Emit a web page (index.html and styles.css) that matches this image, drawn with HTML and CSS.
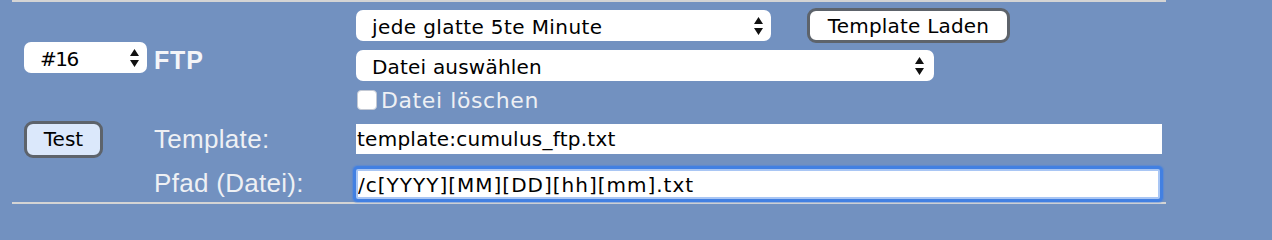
FILE: index.html
```html
<!DOCTYPE html>
<html lang="de">
<head>
<meta charset="utf-8">
<title>FTP</title>
<link rel="stylesheet" href="styles.css">
</head>
<body>
<div class="panel">
  <div class="cell c1 r1">
    <div class="select sel-num"><span class="sel-text">#16</span>
      <svg class="arrows" viewBox="0 0 9 18" width="9" height="18"><path d="M4.5 0 L9 7 L0 7 Z M0 11 L9 11 L4.5 18 Z"/></svg>
    </div>
  </div>
  <div class="cell c2 r1"><span class="title">FTP</span></div>
  <div class="cell c3 r1 stack">
    <div class="line">
      <div class="select sel-when"><span class="sel-text">jede glatte 5te Minute</span>
        <svg class="arrows" viewBox="0 0 9 18" width="9" height="18"><path d="M4.5 0 L9 7 L0 7 Z M0 11 L9 11 L4.5 18 Z"/></svg>
      </div>
      <button class="btn btn-load">Template Laden</button>
    </div>
    <div class="select sel-file"><span class="sel-text">Datei auswählen</span>
      <svg class="arrows" viewBox="0 0 9 18" width="9" height="18"><path d="M4.5 0 L9 7 L0 7 Z M0 11 L9 11 L4.5 18 Z"/></svg>
    </div>
    <label class="check"><span class="box"></span><span class="check-text">Datei löschen</span></label>
  </div>

  <div class="cell c1"><button class="btn btn-test">Test</button></div>
  <div class="cell c2"><span class="label">Template:</span></div>
  <div class="cell c3"><input class="field" type="text" value="template:cumulus_ftp.txt"></div>

  <div class="cell c1"></div>
  <div class="cell c2 low"><span class="label">Pfad (Datei):</span></div>
  <div class="cell c3 low"><input class="field focused" type="text" value="/c[YYYY][MM][DD][hh][mm].txt"></div>
</div>
</body>
</html>
```
FILE: styles.css
```css
html, body {
  margin: 0;
  padding: 0;
  background: #7291c0;
}

body {
  font-family: "Liberation Sans", Arial, sans-serif;
  width: 1272px;
  height: 206px;
  overflow: hidden;
}

.panel {
  margin-left: 12px;
  width: 1154px;
  border-top: 2px solid #d4d4d4;
  border-bottom: 2px solid #d4d4d4;
  display: grid;
  grid-template-columns: 142px 202px 810px;
  grid-template-rows: 116px 42px 42px;
}

.cell {
  display: flex;
  align-items: center;
}

.c1 {
  padding-left: 12px;
}

.c1.r1 {
  align-items: flex-start;
  padding-top: 40px;
}

.low {
  padding-top: 5px;
}

.stack {
  flex-direction: column;
  align-items: flex-start;
  padding-top: 6px;
}

.line {
  display: flex;
  align-items: center;
  gap: 36px;
  height: 35px;
}

.select {
  box-sizing: border-box;
  height: 31px;
  background: #fff;
  border-radius: 7px;
  display: flex;
  align-items: center;
  justify-content: space-between;
  padding: 3px 8px 0 16px;
  font-family: "DejaVu Sans", "Liberation Sans", sans-serif;
  font-size: 20px;
  letter-spacing: 0.4px;
  color: #000;
}

.arrows {
  fill: #111;
  flex: none;
  margin-top: -3px;
}

.sel-num {
  width: 123px;
  letter-spacing: -1.5px;
}

.sel-when {
  width: 415px;
}

.sel-file {
  width: 578px;
  margin-top: 7px;
  padding-right: 10px;
  letter-spacing: 0.2px;
}

.title {
  font-size: 25px;
  font-weight: bold;
  color: #f4f5f8;
  letter-spacing: 0.8px;
}

.label {
  font-size: 26px;
  letter-spacing: 0.3px;
  color: #eef0f4;
}

.btn {
  font-family: "DejaVu Sans", "Liberation Sans", sans-serif;
  font-size: 20px;
  color: #000;
  border: 3px solid #5d636b;
  border-radius: 9px;
  padding: 0;
  box-sizing: border-box;
}

.btn-load {
  width: 203px;
  height: 35px;
  background: #fff;
  letter-spacing: 0.2px;
}

.btn-test {
  width: 79px;
  height: 37px;
  background: #dbe8fb;
}

.check {
  display: flex;
  align-items: center;
  gap: 4px;
  height: 26px;
  margin-top: 6px;
  margin-left: 1px;
}

.box {
  box-sizing: border-box;
  width: 20px;
  height: 20px;
  background: #fff;
  border: 1px solid #c3c9d4;
  border-radius: 4px;
}

.check-text {
  font-family: "DejaVu Sans", "Liberation Sans", sans-serif;
  font-size: 22px;
  letter-spacing: 0.6px;
  color: #eef0f4;
}

.field {
  box-sizing: border-box;
  width: 806px;
  height: 30px;
  border: 0;
  margin: 0;
  padding: 0 0 0 1px;
  background: #fff;
  font-family: "DejaVu Sans", "Liberation Sans", sans-serif;
  font-size: 20px;
  letter-spacing: 0.25px;
  color: #000;
  outline: none;
}

.field.focused {
  width: 804px;
  border: 2px solid #a9c6f4;
  padding: 2px 0 0 0;
  border-radius: 2px;
  letter-spacing: 1px;
  box-shadow: 0 0 0 3px #4280e2, 0 0 1px 4px rgba(66, 128, 226, 0.45);
}
```
